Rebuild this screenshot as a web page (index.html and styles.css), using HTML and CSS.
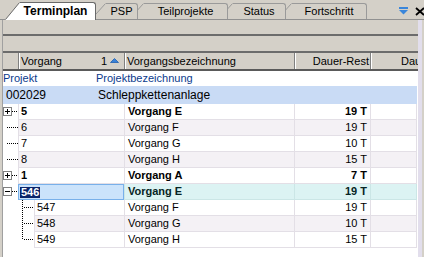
FILE: index.html
```html
<!DOCTYPE html>
<html>
<head>
<meta charset="utf-8">
<link rel="stylesheet" href="styles.css">
</head>
<body>
<div class="app">
  <div class="tabbar">
    <div class="tab active tab-terminplan">
      <svg class="slant" width="15" height="18" viewBox="0 0 15 18"><path d="M0 18 L15 0 L15 18 Z" fill="#fff"/><path d="M0.5 17.5 L14.5 0.5" stroke="#6a6a6a" fill="none"/></svg>
      <div class="tab-body">Terminplan</div>
    </div>
    <div class="tab tab-psp">
      <svg class="slant" width="15" height="16" viewBox="0 0 15 16"><path d="M0 16 L15 0 L15 16 Z" fill="#d4d0c8"/><path d="M0.5 16 L14.5 0.5" stroke="#9a9a9a" fill="none"/></svg>
      <div class="tab-body">PSP</div>
    </div>
    <div class="tab tab-teil">
      <svg class="slant" width="15" height="16" viewBox="0 0 15 16"><path d="M0 16 L15 0 L15 16 Z" fill="#d4d0c8"/><path d="M0.5 16 L14.5 0.5" stroke="#9a9a9a" fill="none"/></svg>
      <div class="tab-body">Teilprojekte</div>
    </div>
    <div class="tab tab-status">
      <svg class="slant" width="15" height="16" viewBox="0 0 15 16"><path d="M0 16 L15 0 L15 16 Z" fill="#d4d0c8"/><path d="M0.5 16 L14.5 0.5" stroke="#9a9a9a" fill="none"/></svg>
      <div class="tab-body">Status</div>
    </div>
    <div class="tab tab-fort">
      <svg class="slant" width="15" height="16" viewBox="0 0 15 16"><path d="M0 16 L15 0 L15 16 Z" fill="#d4d0c8"/><path d="M0.5 16 L14.5 0.5" stroke="#9a9a9a" fill="none"/></svg>
      <div class="tab-body">Fortschritt</div>
    </div>
    <div class="tools">
      <svg width="9" height="8" viewBox="0 0 9 8"><rect x="0" y="0" width="9" height="2" fill="#3a86db"/><path d="M0 3 H9 L4.5 7.5 Z" fill="#3a86db"/></svg>
      <svg class="close" width="10" height="9" viewBox="0 0 10 9"><path d="M1 1 L9 8 M9 1 L1 8" stroke="#000" stroke-width="1.8" fill="none"/></svg>
    </div>
  </div>

  <div class="panel">
    <div class="main">
      <div class="toolbar tb1"></div>
      <div class="toolbar tb2"></div>
      <div class="header">
        <div class="hcell h0"></div>
        <div class="hcell h1"><span>Vorgang</span><span class="sort">1 <svg width="9" height="5" viewBox="0 0 9 5"><path d="M0.5 4.5 L4.5 0.5 L8.5 4.5 Z" fill="#3a82d8" stroke="#1f5fb0" stroke-width="0.8"/></svg></span></div>
        <div class="hcell h2">Vorgangsbezeichnung</div>
        <div class="hcell h3">Dauer-Rest</div>
        <div class="hcell h4">Dauer</div>
      </div>
      <div class="grid">
        <div class="plabel"><span class="pl1">Projekt</span><span>Projektbezeichnung</span></div>
        <div class="prow"><span class="pr1">002029</span><span>Schleppkettenanlage</span></div>

        <div class="row bold">
          <div class="tree"><svg width="15" height="16" viewBox="0 0 15 16"><rect x="0.5" y="3.5" width="8" height="8" fill="#fff" stroke="#808080"/><path d="M2 7.5 H7 M4.5 5 V10" stroke="#000"/><line x1="9" y1="7.5" x2="15" y2="7.5" stroke="#000" stroke-dasharray="1 1"/></svg></div>
          <div class="cell c-num">5</div><div class="cell c-name">Vorgang E</div><div class="cell c-dur">19 T</div><div class="cell c-dau"></div>
        </div>
        <div class="row alt">
          <div class="tree"><svg width="15" height="16" viewBox="0 0 15 16"><line x1="4" y1="7.5" x2="15" y2="7.5" stroke="#000" stroke-dasharray="1 1"/></svg></div>
          <div class="cell c-num">6</div><div class="cell c-name">Vorgang F</div><div class="cell c-dur">19 T</div><div class="cell c-dau"></div>
        </div>
        <div class="row">
          <div class="tree"><svg width="15" height="16" viewBox="0 0 15 16"><line x1="4" y1="7.5" x2="15" y2="7.5" stroke="#000" stroke-dasharray="1 1"/></svg></div>
          <div class="cell c-num">7</div><div class="cell c-name">Vorgang G</div><div class="cell c-dur">10 T</div><div class="cell c-dau"></div>
        </div>
        <div class="row alt">
          <div class="tree"><svg width="15" height="16" viewBox="0 0 15 16"><line x1="4" y1="7.5" x2="15" y2="7.5" stroke="#000" stroke-dasharray="1 1"/></svg></div>
          <div class="cell c-num">8</div><div class="cell c-name">Vorgang H</div><div class="cell c-dur">15 T</div><div class="cell c-dau"></div>
        </div>
        <div class="row bold">
          <div class="tree"><svg width="15" height="16" viewBox="0 0 15 16"><rect x="0.5" y="3.5" width="8" height="8" fill="#fff" stroke="#808080"/><path d="M2 7.5 H7 M4.5 5 V10" stroke="#000"/><line x1="9" y1="7.5" x2="15" y2="7.5" stroke="#000" stroke-dasharray="1 1"/></svg></div>
          <div class="cell c-num">1</div><div class="cell c-name">Vorgang A</div><div class="cell c-dur">7 T</div><div class="cell c-dau"></div>
        </div>
        <div class="row bold current">
          <div class="tree"><svg width="15" height="16" viewBox="0 0 15 16"><rect x="0.5" y="3.5" width="8" height="8" fill="#fff" stroke="#808080"/><path d="M2 7.5 H7" stroke="#000"/><line x1="9" y1="7.5" x2="15" y2="7.5" stroke="#000" stroke-dasharray="1 1"/></svg></div>
          <div class="cell c-num selected"><span class="hl">546</span></div><div class="cell c-name">Vorgang E</div><div class="cell c-dur">19 T</div><div class="cell c-dau"></div>
        </div>
        <div class="row deep">
          <div class="tree"><svg width="31" height="16" viewBox="0 0 31 16"><line x1="19.5" y1="0" x2="19.5" y2="16" stroke="#000" stroke-dasharray="1 1"/><line x1="21" y1="7.5" x2="31" y2="7.5" stroke="#000" stroke-dasharray="1 1"/></svg></div>
          <div class="cell c-num">547</div><div class="cell c-name">Vorgang F</div><div class="cell c-dur">19 T</div><div class="cell c-dau"></div>
        </div>
        <div class="row deep alt">
          <div class="tree"><svg width="31" height="16" viewBox="0 0 31 16"><line x1="19.5" y1="0" x2="19.5" y2="16" stroke="#000" stroke-dasharray="1 1"/><line x1="21" y1="7.5" x2="31" y2="7.5" stroke="#000" stroke-dasharray="1 1"/></svg></div>
          <div class="cell c-num">548</div><div class="cell c-name">Vorgang G</div><div class="cell c-dur">10 T</div><div class="cell c-dau"></div>
        </div>
        <div class="row deep">
          <div class="tree"><svg width="31" height="16" viewBox="0 0 31 16"><line x1="19.5" y1="0" x2="19.5" y2="8" stroke="#000" stroke-dasharray="1 1"/><line x1="21" y1="7.5" x2="31" y2="7.5" stroke="#000" stroke-dasharray="1 1"/></svg></div>
          <div class="cell c-num">549</div><div class="cell c-name">Vorgang H</div><div class="cell c-dur">15 T</div><div class="cell c-dau"></div>
        </div>
      </div>
    </div>
    <div class="vstripe"></div>
    <div class="rest"></div>
  </div>
</div>
</body>
</html>
```

FILE: styles.css
```css
html, body {
  margin: 0;
  padding: 0;
}
body {
  width: 424px;
  height: 257px;
  overflow: hidden;
  background: #d4d0c8;
  font-family: "Liberation Sans", Arial, sans-serif;
  font-size: 11px;
  color: #000;
}
.app {
  width: 424px;
  height: 257px;
  display: flex;
  flex-direction: column;
}

/* tabs */
.tabbar {
  height: 20px;
  box-sizing: border-box;
  border-bottom: 1px solid #919191;
  display: flex;
  align-items: flex-end;
  padding-left: 5px;
  flex: none;
}
.tab {
  display: flex;
  height: 16px;
  position: relative;
  flex: none;
}
.slant {
  display: block;
  flex: none;
}
.tab-body {
  flex: 1;
  border-top: 1px solid #9a9a9a;
  border-right: 1px solid #9a9a9a;
  border-top-right-radius: 3px;
  background: #d4d0c8;
  text-align: center;
  line-height: 15px;
  font-size: 11px;
  white-space: nowrap;
}
.tab.active {
  height: 18px;
  margin-bottom: -1px;
  z-index: 6;
}
.tab.active .tab-body {
  background: #fff;
  border-color: #6a6a6a;
  font-weight: bold;
  font-size: 12px;
  line-height: 17px;
  padding-right: 4px;
}
.tab-terminplan { width: 91px; }
.tab-psp { width: 47px; margin-left: -5px; z-index: 4; }
.tab-teil { width: 99px; margin-left: -9px; z-index: 3; }
.tab-status { width: 68px; margin-left: -10px; z-index: 2; }
.tab-fort { width: 90px; margin-left: -9px; z-index: 1; }

.tools {
  align-self: flex-start;
  display: flex;
  align-items: flex-start;
  gap: 7px;
  margin-left: 32px;
  padding-top: 7px;
}
.tools svg { display: block; flex: none; }
.tools .close { margin-top: 0; }

/* panel */
.panel {
  flex: 1;
  display: flex;
  min-height: 0;
}
.main {
  width: 416px;
  box-sizing: border-box;
  margin-left: 2px;
  border-left: 1px solid #a0a0a0;
  background: #fff;
  display: flex;
  flex-direction: column;
  overflow: hidden;
  flex: none;
}
.vstripe {
  width: 4px;
  background: #e2deec;
  flex: none;
}
.rest {
  flex: 1;
  background: #d4d0c8;
}
.toolbar {
  background: #d4d0c8;
  box-sizing: border-box;
  border-bottom: 2px solid #6c6c6c;
  flex: none;
}
.tb1 { height: 16px; }
.tb2 { height: 17px; }

/* header */
.header {
  height: 18px;
  box-sizing: border-box;
  border-bottom: 2px solid #5a5a5a;
  background: #d4d0c8;
  display: flex;
  flex: none;
}
.hcell {
  height: 16px;
  line-height: 16px;
  box-sizing: border-box;
  border-right: 1px solid #808080;
  box-shadow: inset 1px 0 #fff;
  white-space: nowrap;
  overflow: hidden;
  flex: none;
}
.h0 { width: 16px; box-shadow: none; }
.h1 {
  width: 106px;
  padding-left: 2px;
  padding-right: 5px;
  display: flex;
  justify-content: space-between;
}
.sort {
  display: flex;
  align-items: center;
  gap: 3px;
}
.sort svg { display: block; margin-top: -1px; }
.h2 { width: 170px; padding-left: 2px; }
.h3 { width: 76px; text-align: right; padding-right: 1px; }
.h4 { width: 63px; text-align: right; padding-right: 2px; }

/* grid */
.grid {
  flex: 1;
  background: #fff;
}
.plabel {
  height: 15px;
  line-height: 15px;
  color: #0b3a8c;
  display: flex;
  white-space: nowrap;
}
.pl1 { width: 93px; flex: none; }
.prow {
  height: 18px;
  line-height: 18px;
  width: 414px;
  background: #c9dbf5;
  font-size: 12px;
  display: flex;
  white-space: nowrap;
}
.pr1 { width: 92px; padding-left: 3px; flex: none; }

.row {
  display: flex;
  height: 16px;
}
.tree {
  width: 15px;
  flex: none;
  background: #fff;
}
.tree svg { display: block; shape-rendering: crispEdges; }
.row.deep .tree { width: 31px; }
.cell {
  box-sizing: border-box;
  height: 16px;
  line-height: 15px;
  border-left: 1px solid #e3dfe6;
  border-bottom: 1px solid #e3dfe6;
  white-space: nowrap;
  overflow: hidden;
  flex: none;
}
.row.alt .cell { background: #f4f1f5; }
.row.bold .cell { font-weight: bold; }
.c-num { width: 106px; padding-left: 2px; }
.row.deep .c-num { width: 90px; }
.c-name { width: 170px; padding-left: 3px; }
.c-dur { width: 76px; text-align: right; padding-right: 3px; }
.c-dau { width: 47px; border-right: 1px solid #e3dfe6; }

.row.current .cell {
  background: #dcf3f3;
  border-color: #cbe6e6;
  color: #062424;
}
.row.current .cell.selected {
  background: #cbe3fb;
  border: 1px solid #78b0ea;
  padding-left: 1px;
  line-height: 13px;
  padding-top: 1px;
}
.hl {
  background: #0a246a;
  color: #fff;
  padding: 0 1px;
  display: inline-block;
  line-height: 11px;
  height: 11px;
  margin-top: 1px;
}
```
